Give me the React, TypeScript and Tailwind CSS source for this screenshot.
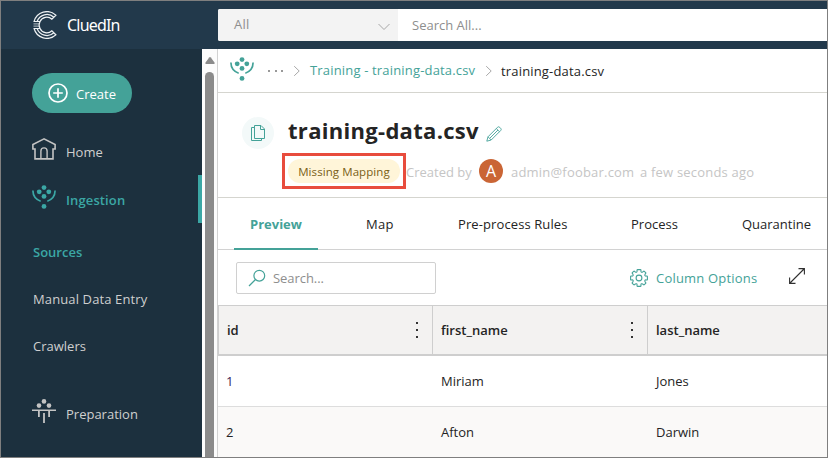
import React from "react";

function Sprout({ className }: { className: string }) {
  return (
    <svg viewBox="0 0 24 24" className={className} fill="currentColor">
      <circle cx="12" cy="2.6" r="2.4" />
      <circle cx="7.2" cy="6.8" r="2.4" />
      <circle cx="16.8" cy="6.8" r="2.4" />
      <circle cx="12" cy="11.4" r="2.4" />
      <circle cx="12" cy="21.4" r="2.4" />
      <path d="M.9 5.6C1 10.500 4 14.700 8.700 16.200M23.100 5.600C23 10.500 20 14.700 15.300 16.200" fill="none" stroke="currentColor" strokeWidth="1.7" />
    </svg>
  );
}

function Logo() {
  return (
    <svg viewBox="0 0 24 28" className="h-7 w-6 shrink-0" fill="none" stroke="#eef1f3" strokeWidth="1.2">
      <path d="M22.900 4.200A13.200 13.200 0 0 0 1.100 10.500H7A7.500 7.500 0 0 1 18.900 8.200Z" />
      <path d="M22.900 23.800A13.200 13.200 0 0 1 1.100 17.500H7A7.500 7.500 0 0 0 18.900 19.800Z" />
      <path d="M20.900 6.200A10.400 10.400 0 0 0 4.100 10.500M20.900 21.800A10.400 10.400 0 0 1 4.100 17.500" />
      <path d="M7 10.500A7.500 7.500 0 0 0 7 17.500" />
      <path d="M.5 12.900H6.300M.5 15.100H6.300" strokeOpacity=".6" />
    </svg>
  );
}

function Chevron({ className }: { className: string }) {
  return (
    <svg viewBox="0 0 8 12" className={className} fill="none" stroke="#a9a9a9" strokeWidth="1">
      <path d="M1.200 1.200L6.200 6L1.200 10.800" />
    </svg>
  );
}

function Kebab() {
  return (
    <span className="flex w-[2px] flex-col gap-[5px]">
      <i className="h-[2px] w-[2px] bg-[#333]" />
      <i className="h-[2px] w-[2px] bg-[#333]" />
      <i className="h-[2px] w-[2px] bg-[#333]" />
    </span>
  );
}

function Gear() {
  return (
    <svg viewBox="0 0 18 18" className="h-[18px] w-[18px]" fill="none" stroke="#44a298" strokeWidth="1.1">
      <circle cx="9" cy="9" r="2.900" />
      <path strokeLinejoin="round" d="M7.600.6Q6.800.6 7.100 2.100Q7.100 3.800 5.200 2.900Q4.200 1.800 3.700 2.300L2.300 3.700Q1.800 4.200 2.900 5.200Q3.800 7.100 2.100 7.100Q.6 6.800.6 7.600V10.400Q.6 11.200 2.100 10.900Q3.800 10.900 2.900 12.800Q1.800 13.800 2.300 14.300L3.700 15.700Q4.200 16.200 5.200 15.100Q7.100 14.200 7.100 15.900Q6.800 17.400 7.600 17.400H10.400Q11.200 17.400 10.900 15.900Q10.900 14.200 12.800 15.100Q13.800 16.200 14.300 15.700L15.700 14.300Q16.200 13.800 15.100 12.800Q14.200 10.900 15.900 10.900Q17.400 11.200 17.400 10.400V7.600Q17.400 6.800 15.900 7.100Q14.200 7.100 15.100 5.200Q16.200 4.200 15.700 3.700L14.300 2.300Q13.800 1.800 12.800 2.900Q10.900 3.800 10.900 2.100Q11.200.6 10.400.6Z" />
    </svg>
  );
}

export default function App() {
  return (
    <div className="flex h-[458px] w-[828px] flex-col overflow-hidden border border-[#7f7f7f] bg-white font-['Open_Sans','Noto_Sans',sans-serif] text-[13px] leading-5 whitespace-nowrap text-[#242424]">
      <header className="flex h-12 shrink-0 bg-[#22394b]">
        <div className="flex w-[217px] shrink-0 items-center pl-8">
          <Logo />
          <span className="ml-[10px] font-['Noto_Sans',sans-serif] text-[16px] tracking-[-0.8px] text-white">CluedIn</span>
        </div>
        <div className="mt-2 flex h-8 flex-1 rounded-l-[2px] bg-white text-[#8e8e8e]">
          <div className="flex w-[180px] items-center justify-between rounded-l-[2px] bg-[#f3f3f3] pr-2 pl-4">
            <span className="-mt-[2px] tracking-[0.2px]">All</span>
            <svg viewBox="0 0 12 8" className="mt-[3px] h-2 w-3" fill="none" stroke="#a6a6a6"><path d="M.5 1L6 6.500L11.500 1" /></svg>
          </div>
          <span className="pt-[6px] pl-[14px]">Search All...</span>
        </div>
      </header>

      <div className="flex min-h-0 flex-1">
        <nav className="flex w-[201px] shrink-0 flex-col bg-[#1c303e] text-[#cfcfcf]">
          <button className="mt-6 ml-[31px] flex h-10 w-[100px] items-center rounded-full bg-[#44a298] pl-4 text-white">
            <svg viewBox="0 0 20 20" className="h-5 w-5" fill="none" stroke="currentColor" strokeWidth="1.700"><circle cx="10" cy="10" r="9" /><path d="M10 5.200V14.800M5.200 10H14.800" /></svg>
            <span className="mt-[2px] ml-2">Create</span>
          </button>
          <div className="mt-[14px] flex h-12 items-center pl-[31px]">
            <svg viewBox="0 0 24 22" className="-mt-[5px] h-[22px] w-6" fill="none" stroke="#c4c4c4" strokeWidth="1.600">
              <path d="M12 .9L.9 6.500V11H3V20.900H21V11H23.100V6.500Z" />
              <path d="M8.900 20.900V13A3.100 3.100 0 0 1 15.100 13V20.900" strokeWidth="1.400" />
            </svg>
            <span className="mt-[2px] ml-[10px]">Home</span>
          </div>
          <div className="flex h-12 items-center border-r-4 border-[#3ba7a5] pl-[31px] font-semibold text-[#3ba7a5]">
            <Sprout className="-mt-[5px] h-6 w-6" />
            <span className="mt-[2px] ml-[10px] tracking-[0.12px]">Ingestion</span>
          </div>
          <span className="mt-[19px] ml-8 font-semibold text-[#3ba7a5]">Sources</span>
          <span className="mt-[27px] ml-8 tracking-[0.12px]">Manual Data Entry</span>
          <span className="mt-[27px] ml-8">Crawlers</span>
          <div className="mt-[33px] flex h-12 items-center pl-[31px]">
            <svg viewBox="0 0 24 24" className="-mt-[5px] h-6 w-6" fill="#c4c4c4">
              <circle cx="12" cy="2.400" r="2.300" /><circle cx="7" cy="6.600" r="2.300" /><circle cx="17" cy="6.600" r="2.300" />
              <path d="M0 10.500h24v1.500H0zM6 12h1.800v6H6zM16.200 12h1.800v6h-1.800zM11.100 14h1.800v10h-1.800z" />
            </svg>
            <span className="mt-[2px] ml-[10px]">Preparation</span>
          </div>
        </nav>
        <div className="flex w-[15px] shrink-0 flex-col items-center bg-[#fcfcfc] pt-2">
          <svg viewBox="0 0 10 7" className="h-[7px] w-[10px]" fill="#8b8b8b"><path d="M4.200.4Q5-.3 5.800.4L9.500 5.400Q10 7 9 7H1Q0 7 .5 5.400Z" /></svg>
          <div className="mt-2 w-[9px] flex-1 rounded-t-full bg-[#8b8b8b]" />
        </div>

        <main className="flex min-w-0 flex-1 flex-col border-l border-[#d2d2d2]">
          <div className="flex h-11 shrink-0 items-center border-b border-[#d5d5cf] pl-3">
            <Sprout className="-mt-[3px] h-6 w-6 text-[#44a298]" />
            <span className="ml-[14px] flex w-[15px] justify-between"><i className="h-[2px] w-[2px] bg-[#999]" /><i className="h-[2px] w-[2px] bg-[#999]" /><i className="h-[2px] w-[2px] bg-[#999]" /></span>
            <Chevron className="ml-[10px] h-3 w-2" />
            <span className="-mt-px ml-[9px] w-[166px] tracking-[0.17px] text-[#44a298]">Training - training-data.csv</span>
            <Chevron className="ml-[9px] h-3 w-2" />
            <span className="ml-2 tracking-[0.17px]">training-data.csv</span>
          </div>

          <section className="flex h-[105px] shrink-0 border-b border-[#d5d5cf] pl-6">
            <div className="mt-6 flex h-8 w-8 items-center justify-center rounded-full bg-[#f3f9f9]">
              <svg viewBox="0 0 14 16" className="h-4 w-[14px]" fill="none" stroke="#44a298"><path d="M3.500.5H10L13.500 4V13.500H3.500ZM9.500.5V4.500H13.500M3.500 2.500H.5V15.500H10.500V13.500" /></svg>
            </div>
            <div className="ml-2 flex flex-col">
              <div className="mt-5 flex h-9 items-center pl-[6px]">
                <h1 className="-mt-[2px] text-[22px] leading-9 font-bold tracking-[0.3px]">training-data.csv</h1>
                <svg viewBox="0 0 16 16" className="mt-[6px] ml-[7px] h-4 w-4" fill="none" stroke="#44a298"><path d="M.8 15.200L2 10.800L11.500 1.300Q12.600.2 13.800 1.400L14.600 2.200Q15.800 3.400 14.700 4.500L5.200 14ZM2 10.800L5.200 14M10.300 2.500L13.500 5.700M4 12L12 4" strokeWidth=".9" /></svg>
              </div>
              <div className="mt-[4px] flex h-9 items-center text-[#c5c5c5]">
                <div className="flex h-9 w-[124px] items-center justify-center border-3 border-[#e84c3d]">
                  <span className="flex h-6 w-28 items-center justify-center rounded-full bg-[#fff5d9] pt-px text-[11.5px] tracking-[0.08px] text-[#795f16]">Missing Mapping</span>
                </div>
                <span className="mt-[2px] w-[66px]">Created by</span>
                <span className="ml-[7px] flex h-6 w-6 items-center justify-center rounded-full bg-[#ca6535] text-[16px] text-white">A</span>
                <span className="mt-[2px] ml-2 w-[124px] tracking-[0.2px]">admin@foobar.com</span>
                <span className="mt-[2px] ml-[5px] tracking-[0.2px]">a few seconds ago</span>
              </div>
            </div>
          </section>

          <div className="flex h-[52px] shrink-0 border-b border-[#d2d2d2] pl-4 leading-[53px]">
            <span className="h-[52px] w-[84px] border-b-2 border-[#44a298] pl-4 font-bold text-[#44a298]">Preview</span>
            <span className="w-[92px] pl-12 tracking-[0.3px]">Map</span>
            <span className="w-[173px] pl-12 tracking-[0.1px]">Pre-process Rules</span>
            <span className="w-[111px] pl-12">Process</span>
            <span className="pl-12">Quarantine</span>
          </div>

          <div className="flex h-[55px] shrink-0 items-center pl-[18px]">
            <div className="flex h-8 w-[200px] items-center rounded-[2px] border border-[#d0d0d0] pl-3 text-[#8e8e8e]">
              <svg viewBox="0 0 18 18" className="-ml-px h-[18px] w-[18px]" fill="none" stroke="#44a298" strokeWidth="1.200"><circle cx="11.300" cy="6.700" r="5.400" /><path d="M7.500 10.500L1 17" /></svg>
              <span className="ml-[7px] tracking-[-0.05px]">Search...</span>
            </div>
            <div className="ml-[194px] flex w-[128px] items-center gap-2 tracking-[0.2px] text-[#44a298]"><Gear /><span>Column Options</span></div>
            <svg viewBox="0 0 16 16" className="-mt-[3px] ml-[31px] h-4 w-4" fill="none" stroke="#303030" strokeWidth="1.100"><path d="M1 15L15 1M9.500.6H15.400V6.500M.6 9.500V15.400H6.500" /></svg>
          </div>

          <div className="grid h-[51px] shrink-0 grid-cols-[214px_215px_1fr] border-t border-b-2 border-[#cecece] bg-[#f3f2f1] font-semibold">
            <div className="flex items-center justify-between border-l border-[#cecece] pr-[14px] pl-2"><span>id</span><Kebab /></div>
            <div className="flex items-center justify-between border-l border-[#cecece] pr-[14px] pl-2"><span>first_name</span><Kebab /></div>
            <div className="flex items-center border-l border-[#cecece] pl-2"><span>last_name</span></div>
          </div>
          <div className="grid h-[51px] shrink-0 grid-cols-[214px_215px_1fr] items-center border-b border-[#dddddd]">
            <span className="pl-2 text-[#382257]">1</span><span className="pl-[9px]">Miriam</span><span className="pl-[9px]">Jones</span>
          </div>
          <div className="grid h-[51px] shrink-0 grid-cols-[214px_215px_1fr] items-center bg-[#faf9f8] pb-[2px]">
            <span className="pl-2">2</span><span className="pl-[9px]">Afton</span><span className="pl-[9px]">Darwin</span>
          </div>
        </main>
      </div>
    </div>
  );
}
